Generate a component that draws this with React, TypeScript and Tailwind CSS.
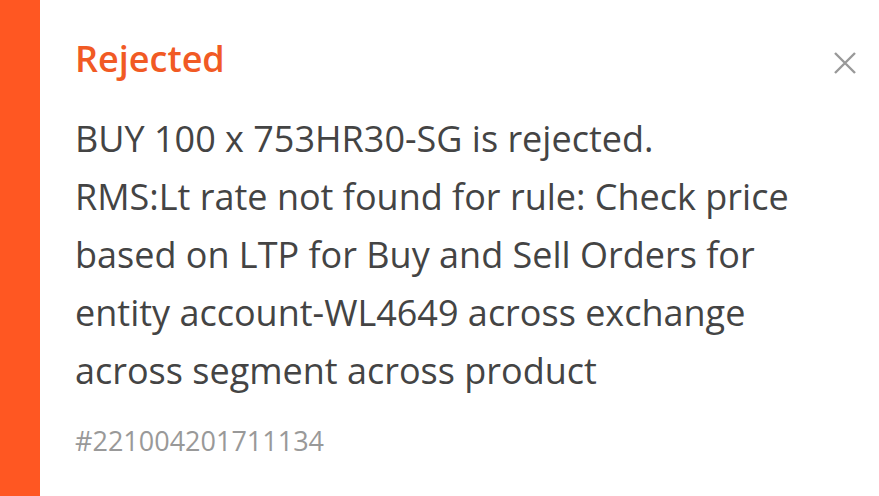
import React from "react";

export default function App() {
  return (
    <div className="flex h-[496px] w-[879px] bg-white" style={{ fontFamily: '"Open Sans", sans-serif' }}>
      <div className="w-10 shrink-0 bg-[#ff5722]" />
      <div className="relative flex-1 pl-[35px] pr-[40px] pt-[35px]">
        <div className="text-[36px] font-semibold leading-[48px] text-[#f15a24]">Rejected</div>
        <button className="absolute right-[23px] top-[52px] text-[#999]">
          <svg width="22" height="22" viewBox="0 0 22 22" fill="none" stroke="currentColor" strokeWidth="2.4">
            <path d="M1 1L21 21M21 1L1 21" />
          </svg>
        </button>
        <div className="mt-[27px] text-[36px] leading-[58px] text-[#444]">
          <div>BUY 100 x 753HR30-SG is rejected.</div>
          <div>RMS:Lt rate not found for rule: Check price based on LTP for Buy and Sell Orders for entity account-WL4649 across exchange across segment across product</div>
        </div>
        <div className="mt-[21px] text-[27px] leading-[40px] text-[#999]">#221004201711134</div>
      </div>
    </div>
  );
}
